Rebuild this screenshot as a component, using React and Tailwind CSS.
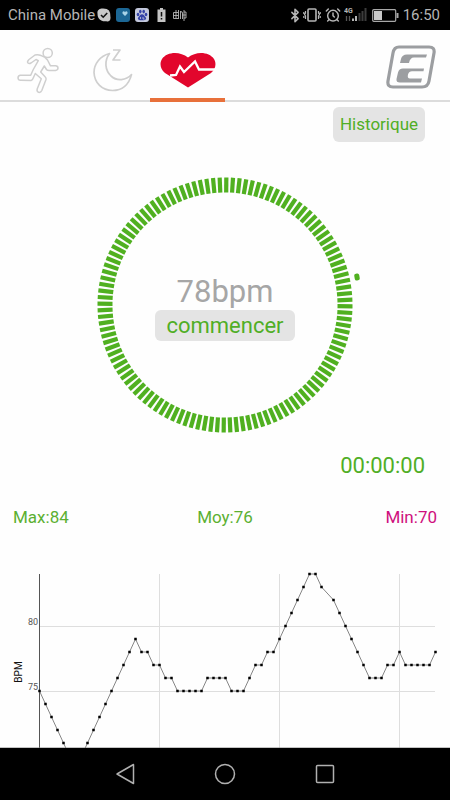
import { Bluetooth, AlarmClock } from "lucide-react";

// ─── DATA ─────────────────────────────────────────────────────────────────────
// One reading per step, null where the sensor skipped a beat
const READINGS = [
  75, 74, 73, 72, 71, 70, 70, 70, 71, 72, 73, 74, 75, 76, 77, 78, 79, 78, 78,
  77, 77, 76, 76, 75, 75, 75, 75, 75, 76, 76, 76, 76, 75, 75, 75, 76, 77, 77,
  78, 78, 79, 80, 81, 82, 83, 84, 84, 83, null, 82, 81, 80, 79, 78, 77, 76, 76,
  76, 77, 77, 78, 77, 77, 77, 77, 77, 78,
];

const STATS = [
  { label: "Max", value: 84, color: "text-[#5cb032]" },
  { label: "Moy", value: 76, color: "text-[#5cb032]" },
  { label: "Min", value: 70, color: "text-[#cf0f7d]" },
];

const TICKS = Array.from({ length: 120 }, (_, i) => i * 3);

// ─── STATUS BAR ───────────────────────────────────────────────────────────────
function StatusBar() {
  return (
    <div className="flex h-[30px] shrink-0 items-center justify-between bg-black pr-[10px] pl-2 text-[15px] text-[#b5b5b5]">
      <div className="flex items-center">
        <span>China Mobile</span>
        <svg className="ml-[2px] h-[14px] w-[14px]" viewBox="0 0 14 14">
          <path d="M4.500 0.500Q10 0 12 2.500Q13.500 5 13.300 8Q14 11 12.500 12.800Q11 14 9.500 13.300Q4 13.800 1.500 10Q0.300 8 0.600 6Q-0.500 1.500 4.500 0.500Z" fill="#c9c9c9" />
          <path d="M4 7l2.200 2.200L10.200 5" stroke="#111" strokeWidth="1.600" fill="none" />
        </svg>
        <svg className="ml-[5px] h-[14px] w-[14px]" viewBox="0 0 14 14">
          <rect width="14" height="14" rx="3" fill="#1c6795" />
          <path d="M9 8L6.500 5.500Q6 3.500 7.500 3.300Q8.600 3.200 9 4.200Q9.400 3.200 10.500 3.300Q12 3.600 11.500 5.500Z" fill="#a9d4e8" />
        </svg>
        <svg className="ml-[5px] h-[14px] w-[14px]" viewBox="0 0 14 14">
          <rect width="14" height="14" rx="3" fill="#c3c8dc" />
          <g fill="#3543a8">
            <ellipse cx="3" cy="6.500" rx="1.300" ry="1.700" />
            <ellipse cx="5.300" cy="3.600" rx="1.300" ry="1.800" />
            <ellipse cx="8.700" cy="3.600" rx="1.300" ry="1.800" />
            <ellipse cx="11" cy="6.500" rx="1.300" ry="1.700" />
            <path d="M7 6.200C9 6.200 9.300 8 10.600 9.200C12 10.800 10.500 12.700 7 12.300C3.500 12.700 2 10.800 3.400 9.200C4.700 8 5 6.200 7 6.200Z" />
          </g>
          <path d="M5.500 9v2M8 9v2h1.500" stroke="#c3c8dc" strokeWidth="0.800" fill="none" />
        </svg>
        <svg className="ml-[8px] h-[14px] w-[9px]" viewBox="0 0 9 14">
          <path d="M3 0h3v1.500h2.500V14h-8V1.500H3Z" fill="#c4c4c4" />
          <path d="M4.500 4v4.500M4.500 10v1.500" stroke="#111" strokeWidth="1.500" />
        </svg>
        <svg className="ml-[7px] h-[14px] w-[14px]" viewBox="0 0 14 14" fill="none" stroke="#b5b5b5">
          <path d="M0.500 4.500v6h5M0.500 4.500h5M0.500 7.500h5M3 2v8.500M5.500 2v9M7.500 3v8M7.500 4q2-1 2 1v6M11 2v11M11 4h2v6h-2M9 7h4" strokeWidth="0.900" />
        </svg>
      </div>

      <div className="flex items-center">
        <Bluetooth className="h-[15px] w-[10px]" strokeWidth={2.5} preserveAspectRatio="xMidYMid slice" />
        <svg className="ml-[3px] h-[14px] w-[18px]" viewBox="0 0 18 14" fill="none" stroke="#b5b5b5">
          <rect x="5" y="1" width="8" height="12" rx="1" strokeWidth="1.600" />
          <path d="M2.500 3v2l-1 1.500 1 1.500v3M0.800 4v2M0.800 8v2M15.500 3v2l1 1.500-1 1.500v3M17.200 4v2M17.200 8v2" strokeWidth="1.200" />
        </svg>
        <AlarmClock className="ml-[4px] h-[16px] w-[16px]" strokeWidth={2.200} />
        <svg className="ml-[3px] h-[16px] w-[24px]" viewBox="0 0 24 16">
          <text x="0" y="6" fontSize="7" fontWeight="bold" fill="#b5b5b5">4G</text>
          <path d="M2.500 9v5M5.500 9v5" stroke="#555" strokeWidth="1.300" />
          <path d="M9 11.500V14M12 9v5" stroke="#b5b5b5" strokeWidth="2" />
          <path d="M15.500 6v8M18.500 4v10M21.500 1v13" stroke="#3c3c3c" strokeWidth="2" />
        </svg>
        <svg className="ml-[4px] h-[13px] w-[27px]" viewBox="0 0 27 13">
          <rect x="0.700" y="0.700" width="23" height="11.600" rx="1" fill="none" stroke="#a8a8a8" strokeWidth="1.200" />
          <rect x="2" y="2" width="8" height="9" fill="#c9c9c9" />
          <path d="M25.500 4v5" stroke="#a8a8a8" strokeWidth="2" />
        </svg>
        <span className="ml-[4px]">16:50</span>
      </div>
    </div>
  );
}

// ─── HEADER TABS ──────────────────────────────────────────────────────────────
function Header() {
  return (
    <header className="flex h-[72px] shrink-0 items-stretch justify-between border-b-2 border-[#dcdcdc]">
      <nav className="-mb-[2px] flex w-1/2">
        <button aria-label="Course" className="flex flex-1 items-center justify-center pt-2">
          <svg className="h-[48px] w-[42px]" viewBox="0 0 42 48" fill="none" stroke="#cfcfcf" strokeWidth="1.500" strokeLinejoin="round">
            <circle cx="30.700" cy="7" r="4.600" />
            <path d="M24 9.500Q21 8.300 18 9L12 13.500Q9.800 15.500 11 17Q12.300 18 14 17L19 13.500L21.300 14.700L16.300 23.500L13.700 29.200L3.500 29.300Q1 29.500 1 32Q1.200 34.300 3.500 34.300L14 34.500Q15.500 34 16 32.500L18.300 27.500L24.300 32.800L20.200 43Q19.500 45.500 21.500 46.300Q23.800 46.800 24.800 44.500L29 33.500Q29.300 32 28.300 31L23.700 26L27.300 20L29.500 23.500Q30.300 24.500 32 24.500H38.500Q41 24 41 22Q40.800 19.800 38.500 19.800H33.500L30.500 14Q28 10.500 24 9.500Z" />
          </svg>
        </button>
        <button aria-label="Sommeil" className="flex flex-1 items-center justify-center pt-2">
          <svg className="h-[44px] w-[40px]" viewBox="0 0 40 44" fill="none" stroke="#cfcfcf" strokeWidth="1.700" strokeLinejoin="round">
            <path d="M16.500 5.500C7 8 1 16 1 24.500C1.500 35 9 42.500 19.500 42.500C29 42.500 36 36.500 38.500 26.500C33 32.500 24 33.500 18 28C12 22 11 13 16.500 5.500Z" />
            <path d="M20 2h7L20 12h7.500" />
          </svg>
        </button>
        <button
          aria-label="Fréquence cardiaque"
          aria-current="page"
          className="flex flex-1 items-center justify-center border-b-4 border-[#e8703a] pt-[12px]"
        >
          <svg className="h-[36px] w-[56px]" viewBox="0 0 56 36">
            <path d="M28 35.500L5 21C0 17 -0.500 11 2 7C7 -0.500 20 -1 28 5.500C36 -1 49 -0.500 54 7C56.500 11 56 17 51 21Z" fill="#e2062c" />
            <path d="M10 23.500L16 23L20 14.500L24 20L35 9.500L39 17.500H56" fill="none" stroke="#fff" strokeWidth="2.300" />
          </svg>
        </button>
      </nav>
      <div className="flex items-center pt-[4px] pr-[14px]">
        <svg className="h-[44px] w-[50px]" viewBox="0 0 50 44">
          <path d="M13 2H43Q49 2 48 8L43 36Q42 42 36 42H7Q1 42 2 36L7 8Q8 2 13 2Z" fill="none" stroke="#9c9ea1" strokeWidth="3.200" />
          <path d="M41 9.500L40 12.500H28Q24 12.500 23 18H14L15 14Q16 9.500 21 9.500Z" fill="#9c9ea1" />
          <path d="M38 23.500L37.500 26.200H26Q23 26.200 22 29.500Q21 33.500 24 33.500H36L35 37.500H14Q10 37.500 10.500 34L12 27.500Q13 23.500 17 23.500Z" fill="#9c9ea1" />
        </svg>
      </div>
    </header>
  );
}

// ─── HEART RATE DIAL ──────────────────────────────────────────────────────────
function Dial() {
  return (
    <div className="mx-auto mt-[32px] grid w-[270px] place-items-center">
      <svg className="col-start-1 row-start-1 h-[262px] w-[270px]" viewBox="-135 -131 270 262">
        {TICKS.map((deg) => (
          <rect
            key={deg}
            x="-2.100"
            y="-127.500"
            width="4.200"
            height="15"
            fill="#50b020"
            transform={`rotate(${deg + 0.600})`}
          />
        ))}
        <rect x="129.500" y="-31.500" width="5" height="7" rx="2" fill="#50b020" transform="rotate(-10 132 -28)" />
      </svg>
      <div className="col-start-1 row-start-1 flex flex-col items-center pt-[5px]">
        <p className="text-[31px] leading-9 text-[#a6a6a6]">78bpm</p>
        <button className="h-[31px] w-[140px] rounded-md bg-[#e4e4e4] text-[22px] leading-8 text-[#50ae26]">
          commencer
        </button>
      </div>
    </div>
  );
}

// ─── CHART ────────────────────────────────────────────────────────────────────
const toX = (i) => 39.5 + i * 6;
const toY = (bpm) => 13 + (84 - bpm) * 13;

function Chart() {
  const points = READINGS.map((bpm, i) => ({ bpm, x: toX(i), y: bpm && toY(bpm) })).filter(
    (p) => p.bpm !== null
  );

  return (
    <svg className="block w-full" viewBox="0 0 450 187" role="img" aria-label="BPM">
      <g stroke="#dedede" strokeWidth="1">
        <path d="M39.500 65.500H435M39.500 130.500H435" />
        <path d="M159.500 13V187M279.500 13V187M399.500 13V187" />
      </g>
      <path d="M39.500 13V187" stroke="#555" />
      <path d="M0 187H450" stroke="#888" />
      <polyline
        points={points.map((p) => `${p.x},${p.y}`).join(" ")}
        fill="none"
        stroke="#777"
        strokeWidth="0.900"
      />
      {points.map((p) => (
        <rect key={p.x} x={p.x - 1.25} y={p.y - 1.25} width="2.500" height="2.500" fill="#000" />
      ))}
      <g fontSize="9" fill="#555" textAnchor="end">
        <text x="38" y="64">80</text>
        <text x="38" y="129">75</text>
      </g>
      <text transform="translate(22 111) rotate(-90)" textAnchor="middle" fontSize="10" fill="#111">
        BPM
      </text>
    </svg>
  );
}

// ─── ANDROID NAV BAR ──────────────────────────────────────────────────────────
function NavBar() {
  return (
    <nav className="flex h-[52px] shrink-0 items-center justify-center gap-[76px] bg-black">
      <button aria-label="Retour">
        <svg className="h-6 w-6" viewBox="0 0 24 24" fill="none" stroke="#b0b0b0" strokeWidth="1.500" strokeLinejoin="round">
          <path d="M20.500 2.500V21.500L4 12Z" />
        </svg>
      </button>
      <button aria-label="Accueil">
        <svg className="h-6 w-6" viewBox="0 0 24 24" fill="none" stroke="#b0b0b0" strokeWidth="1.500">
          <circle cx="12" cy="12" r="9.500" />
        </svg>
      </button>
      <button aria-label="Applications récentes">
        <svg className="h-6 w-6" viewBox="0 0 24 24" fill="none" stroke="#b0b0b0" strokeWidth="1.500">
          <rect x="3.500" y="3.500" width="17" height="17" rx="1" />
        </svg>
      </button>
    </nav>
  );
}

export default function App() {
  return (
    <div className="flex min-h-screen flex-col bg-[#fefefe] font-['Roboto',sans-serif]">
      <StatusBar />
      <Header />
      <main className="flex flex-1 flex-col">
        <div className="flex justify-end pt-[5px] pr-[25px]">
          <button className="h-[35px] w-[92px] rounded-md bg-[#e4e4e4] text-[17px] text-[#50ae26]">
            Historique
          </button>
        </div>

        <Dial />

        <p className="mt-[14px] pr-[25px] text-right text-[22px] leading-8 text-[#50ae26]">00:00:00</p>

        <div className="mt-[23px] grid grid-cols-3 px-[13px] text-[17px] leading-6">
          {STATS.map((s) => (
            <p key={s.label} className={`${s.color} text-center first:text-left last:text-right`}>
              {s.label}:{s.value}
            </p>
          ))}
        </div>

        <div className="mt-auto pt-[30px]">
          <Chart />
        </div>
      </main>
      <NavBar />
    </div>
  );
}
